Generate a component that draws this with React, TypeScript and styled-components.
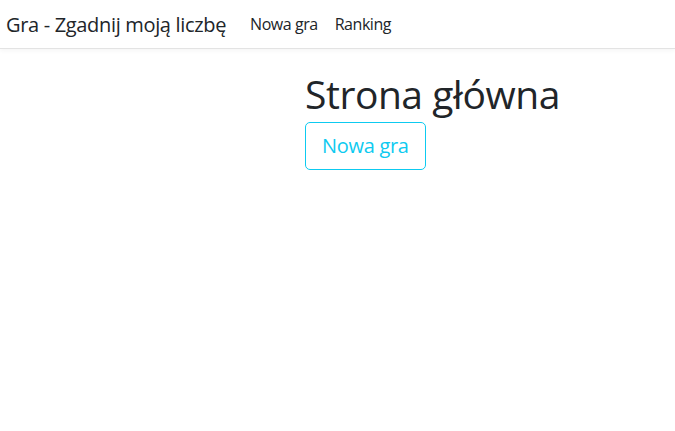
import React from 'react'
import styled, { createGlobalStyle } from 'styled-components'

const GlobalStyle = createGlobalStyle`
  body {
    margin: 0;
    font-family: "Open Sans", "Noto Sans", sans-serif;
    color: #212529;
    background: #fff;
  }
`

const Navbar = styled.nav`
  display: flex;
  align-items: center;
  height: 48px;
  padding: 0 6px;
  border-bottom: 1px solid #e3e3e3;
  box-shadow: 0 2px 4px rgba(0, 0, 0, 0.04);
`

const Brand = styled.a`
  font-size: 20px;
  color: #212529;
  margin-right: 24px;
  letter-spacing: -0.33px;
`

const NavLink = styled.a`
  font-size: 16px;
  color: #212529;
  margin-right: 17px;
  letter-spacing: -0.45px;
`

const Main = styled.main`
  padding-left: 305px;
  padding-top: 22px;
`

const Title = styled.h1`
  margin: 0 0 4px;
  font-size: 39px;
  font-weight: 400;
  line-height: 1.2;
  letter-spacing: -0.45px;
`

const OutlineButton = styled.button`
  font-family: inherit;
  font-size: 20px;
  color: #0dcaf0;
  background: transparent;
  border: 1px solid #0dcaf0;
  border-radius: 5px;
  height: 48px;
  padding: 0 16px;
  letter-spacing: -0.3px;
  cursor: pointer;
`

export default function App() {
  return (
    <>
      <GlobalStyle />
      <Navbar>
        <Brand>Gra - Zgadnij moją liczbę</Brand>
        <NavLink>Nowa gra</NavLink>
        <NavLink>Ranking</NavLink>
      </Navbar>
      <Main>
        <Title>Strona główna</Title>
        <OutlineButton>Nowa gra</OutlineButton>
      </Main>
    </>
  )
}
